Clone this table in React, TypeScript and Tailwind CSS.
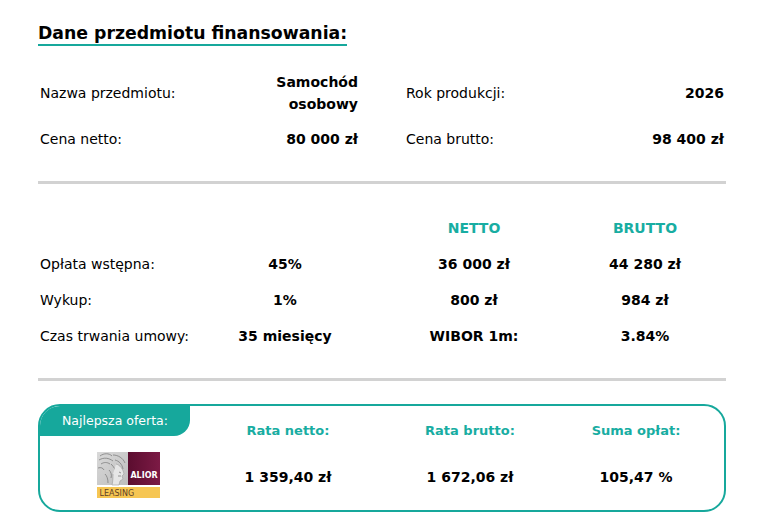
import React from 'react';

const font = { fontFamily: '"DejaVu Sans", Verdana, sans-serif' };

function AliorLogo() {
  return (
    <svg width="63" height="46" viewBox="0 0 63 46">
      <defs>
        <linearGradient id="stone" x1="0" y1="0" x2="1" y2="1">
          <stop offset="0" stopColor="#d9d9d9" />
          <stop offset="1" stopColor="#bdbdbd" />
        </linearGradient>
        <linearGradient id="wine" x1="0" y1="0" x2="1" y2="0">
          <stop offset="0" stopColor="#5b0d2f" />
          <stop offset="1" stopColor="#7c1a45" />
        </linearGradient>
      </defs>
      <rect x="0" y="0" width="31" height="33" fill="url(#stone)" />
      {/* engraved head, rough strokes */}
      <g stroke="#7d7d7d" strokeWidth="0.8" fill="none">
        <path d="M3 4c4-3 9-3 12 0M2 8c5-3 10-2 14 1M4 12c3-2 6-2 9 0M1 16c3-1 5 0 6 2" />
        <path d="M16 3c5 0 10 3 12 8M18 8c4 1 7 4 8 9" />
        <path d="M14 12c3 3 5 6 5 10M12 18c2 2 3 5 2 8M8 22c2 2 3 5 3 9" />
      </g>
      <path d="M19 12c4 1 7 5 8 10l-2 2 1 3-3 2-1 4H15c1-4 1-8 1-11" fill="#e6e6e6" stroke="#9a9a9a" strokeWidth="0.6" />
      <path d="M22 20l2 1M21 24h3" stroke="#6e6e6e" strokeWidth="0.7" />
      <rect x="31" y="0" width="32" height="33" fill="url(#wine)" />
      <text x="47" y="26" textAnchor="middle" fill="#ffffff" fontSize="8" fontWeight="700" style={font}>
        ALIOR
      </text>
      <rect x="0" y="35" width="63" height="11" fill="#f6c653" />
      <text x="2.5" y="43.8" fill="#5e4128" fontSize="8" style={font}>
        LEASING
      </text>
    </svg>
  );
}

export default function App() {
  const teal = 'text-[#18ada2]';

  return (
    <div className="min-h-screen bg-white text-black pl-[38px] pt-[22px]" style={font}>
      <div className="w-[688px]">
        {/* Section title */}
        <h1 className="inline-block text-[17.3px] leading-[22px] font-bold border-b-2 border-[#16a89c]">
          Dane przedmiotu finansowania:
        </h1>

        {/* Subject data */}
        <section className="mt-[25px] px-[2px] grid grid-cols-2 gap-x-12 gap-y-[13px] text-[14px] leading-[22px]">
          <div className="flex items-center justify-between">
            <span>Nazwa przedmiotu:</span>
            <span className="w-[90px] text-right font-bold">Samochód osobowy</span>
          </div>
          <div className="flex items-center justify-between">
            <span>Rok produkcji:</span>
            <span className="font-bold">2026</span>
          </div>
          <div className="flex items-center justify-between">
            <span>Cena netto:</span>
            <span className="font-bold">80 000 zł</span>
          </div>
          <div className="flex items-center justify-between">
            <span>Cena brutto:</span>
            <span className="font-bold">98 400 zł</span>
          </div>
        </section>

        <div className="mt-[31px] h-[3px] bg-[#d2d2d2]" />

        {/* Fees table */}
        <section className="mt-[26px] px-[2px] grid grid-cols-[160px_170px_208px_134px] auto-rows-[36px] items-center text-[14px] leading-[20px]">
          <div />
          <div />
          <div className={`text-center font-bold ${teal}`}>NETTO</div>
          <div className={`text-center font-bold ${teal}`}>BRUTTO</div>

          <div>Opłata wstępna:</div>
          <div className="text-center font-bold">45%</div>
          <div className="text-center font-bold">36 000 zł</div>
          <div className="text-center font-bold">44 280 zł</div>

          <div>Wykup:</div>
          <div className="text-center font-bold">1%</div>
          <div className="text-center font-bold">800 zł</div>
          <div className="text-center font-bold">984 zł</div>

          <div>Czas trwania umowy:</div>
          <div className="text-center font-bold">35 miesięcy</div>
          <div className="text-center font-bold">WIBOR 1m:</div>
          <div className="text-center font-bold">3.84%</div>
        </section>

        <div className="mt-[24px] h-[3px] bg-[#d2d2d2]" />

        {/* Best offer card */}
        <section className="mt-[23px] border-2 border-[#16a89c] rounded-[22px] overflow-hidden grid grid-cols-[176px_144px_220px_112px]">
          <div className="self-start w-[150px] h-[30px] bg-[#16a89c] rounded-br-[16px] flex items-center justify-center text-white text-[12.5px]">
            Najlepsza oferta:
          </div>
          <div className={`pt-[15px] text-center text-[13px] leading-[20px] font-bold ${teal}`}>Rata netto:</div>
          <div className={`pt-[15px] text-center text-[13px] leading-[20px] font-bold ${teal}`}>Rata brutto:</div>
          <div className={`pt-[15px] text-center text-[13px] leading-[20px] font-bold ${teal}`}>Suma opłat:</div>

          <div className="pt-[11px] pb-[12px] flex justify-center">
            <AliorLogo />
          </div>
          <div className="pt-[3px] flex items-center justify-center text-[14px] font-bold">1 359,40 zł</div>
          <div className="pt-[3px] flex items-center justify-center text-[14px] font-bold">1 672,06 zł</div>
          <div className="pt-[3px] flex items-center justify-center text-[14px] font-bold">105,47 %</div>
        </section>
      </div>
    </div>
  );
}
